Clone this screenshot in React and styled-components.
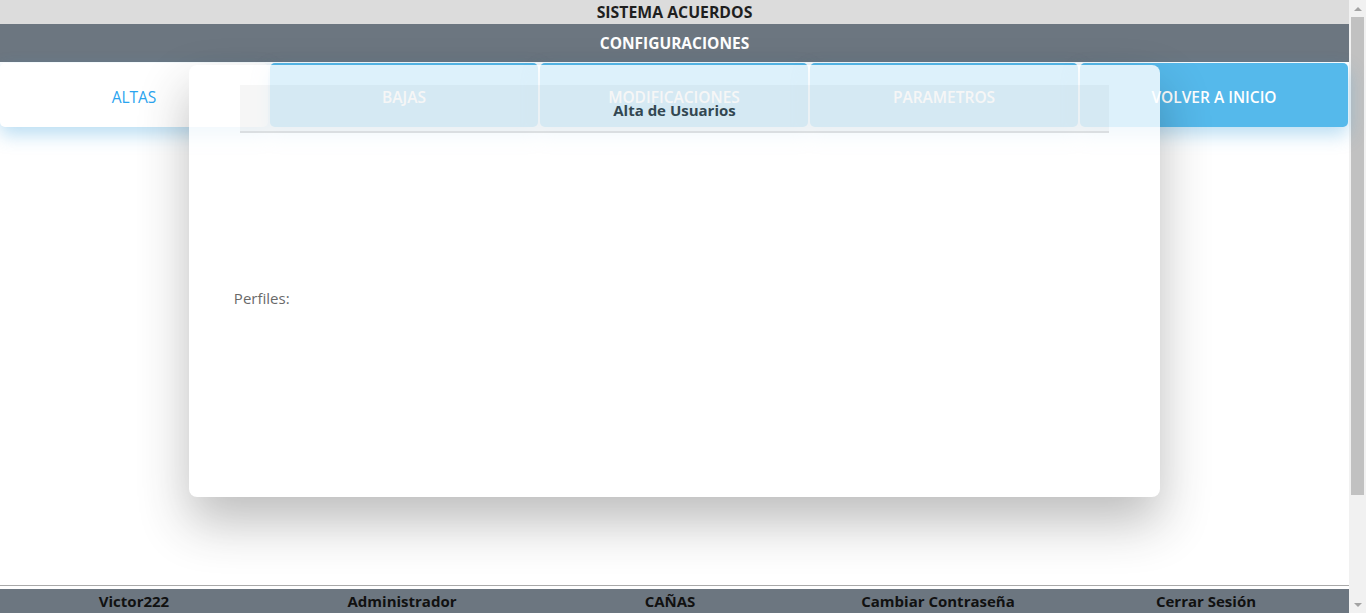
import styled, { createGlobalStyle } from "styled-components";

const GlobalStyle = createGlobalStyle`
  body {
    margin: 0;
    overflow: hidden;
    font-family: "Open Sans", "Noto Sans", sans-serif;
    background: #ffffff;
  }
`;

const Page = styled.div`
  display: flex;
  height: 613px;
  overflow: hidden;
`;

const Content = styled.div`
  position: relative;
  flex: 1;
  display: flex;
  flex-direction: column;
`;

const TopBar = styled.div`
  height: 24px;
  background-color: #dcdcdc;
  color: #1f1f1f;
  font-size: 15.8px;
  font-weight: bold;
  text-align: center;
  line-height: 25px;
`;

const SectionBar = styled.div`
  height: 38px;
  background-color: #6c7680;
  color: #ffffff;
  font-size: 15.5px;
  font-weight: bold;
  text-align: center;
  line-height: 38px;
`;

const TabRow = styled.div`
  display: grid;
  grid-template-columns: repeat(5, 1fr);
  gap: 2px;
  margin-top: 1px;
  padding-right: 1px;
`;

const Tab = styled.button`
  height: 64px;
  padding: 3px 0 0 0;
  border: none;
  border-radius: 5px;
  background-color: ${(p) => (p.active ? "#ffffff" : "#55b9eb")};
  color: ${(p) => (p.active ? "#2aa4ef" : "#ffffff")};
  font-family: inherit;
  font-size: 15.5px;
  font-weight: ${(p) => (p.active ? 500 : 600)};
  box-shadow: 0 8px 18px rgba(60, 160, 220, 0.35);
  cursor: pointer;
`;

const Main = styled.main`
  flex: 0 0 458px;
`;

const Footer = styled.footer`
  flex: 0 0 auto;
  border-top: 1px solid #a9a9a9;
  padding-top: 3px;
`;

const FooterBar = styled.div`
  display: grid;
  grid-template-columns: repeat(5, 1fr);
  height: 30px;
  background-color: #6c7680;
  padding-right: 9px;

  & span {
    text-align: center;
    line-height: 24px;
    font-size: 15px;
    font-weight: bold;
    color: #111;
  }
`;

const ScrollTrack = styled.div`
  flex: 0 0 17px;
  display: flex;
  flex-direction: column;
  background-color: #f1f1f1;
`;

const ScrollArrow = styled.div`
  height: 17px;
  display: flex;
  align-items: center;
  justify-content: center;

  &::before {
    content: "";
    border-left: 4px solid transparent;
    border-right: 4px solid transparent;
    ${(p) => (p.down ? "border-top" : "border-bottom")}: 4px solid #a3a3a3;
  }
`;

const ScrollThumb = styled.div`
  height: 478px;
  margin: 0 2px;
  background-color: #c1c1c1;
`;

const ScrollSpace = styled.div`
  flex: 1;
`;

const Modal = styled.div`
  position: absolute;
  top: 65px;
  left: 0;
  right: 0;
  margin: 0 auto;
  width: 72%;
  height: 432px;
  box-sizing: border-box;
  padding: 20px 51px 0 51px;
  background-color: #ffffff;
  border-radius: 8px;
  box-shadow: 0 25px 50px rgba(0, 0, 0, 0.32);
  opacity: 0.8;
  z-index: 10;
`;

const ModalHeader = styled.div`
  height: 46px;
  background-color: #f5f5f5;
  border-bottom: 2px solid #dcdcdc;
  color: #2b2b2b;
  font-size: 15px;
  font-weight: bold;
  text-align: center;
  line-height: 50px;
`;

const ModalBody = styled.div`
  padding: 154px 0 0 0;
  margin-left: -6px;
`;

const Label = styled.label`
  font-size: 15px;
  color: #444;
  line-height: 22px;
`;

const tabs = ["ALTAS", "BAJAS", "MODIFICACIONES", "PARAMETROS", "VOLVER A INICIO"];
const footerItems = ["Victor222", "Administrador", "CAÑAS", "Cambiar Contraseña", "Cerrar Sesión"];

const App = () => {
  return (
    <Page>
      <GlobalStyle />
      <Content>
        <TopBar>SISTEMA ACUERDOS</TopBar>
        <SectionBar>CONFIGURACIONES</SectionBar>
        <TabRow>
          {tabs.map((t, i) => (
            <Tab key={t} active={i === 0}>
              {t}
            </Tab>
          ))}
        </TabRow>
        <Main />
        <Footer>
          <FooterBar>
            {footerItems.map((f) => (
              <span key={f}>{f}</span>
            ))}
          </FooterBar>
        </Footer>
        <Modal>
          <ModalHeader>Alta de Usuarios</ModalHeader>
          <ModalBody>
            <Label>Perfiles:</Label>
          </ModalBody>
        </Modal>
      </Content>
      <ScrollTrack>
        <ScrollArrow />
        <ScrollThumb />
        <ScrollSpace />
        <ScrollArrow down />
      </ScrollTrack>
    </Page>
  );
};

export default App;
